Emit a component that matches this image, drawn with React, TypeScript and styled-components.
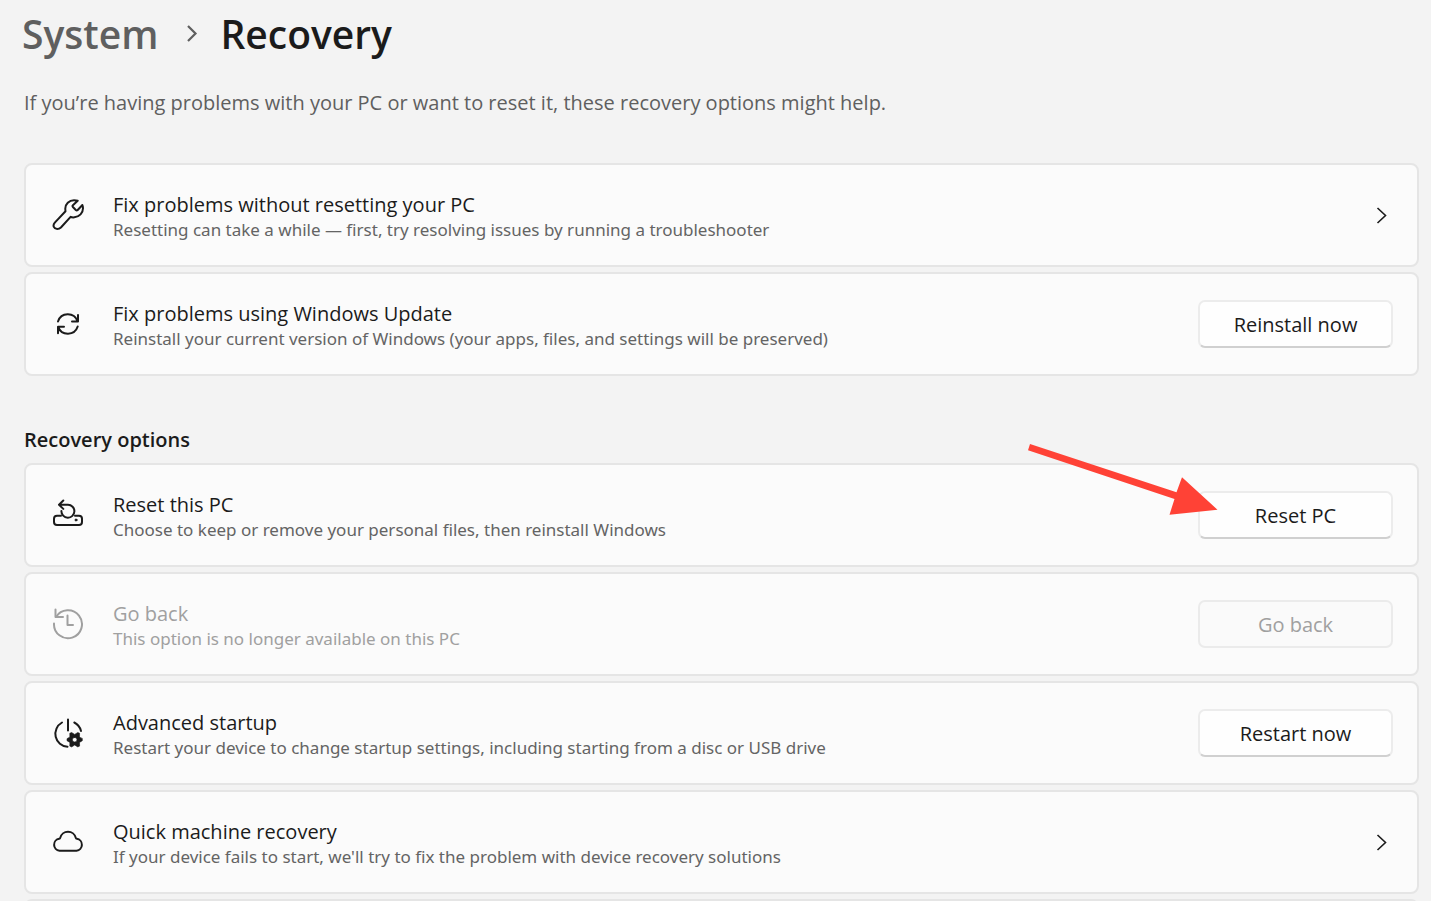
import type { ReactNode } from "react";
import styled, { createGlobalStyle } from "styled-components";

const GlobalStyle = createGlobalStyle`
  * { box-sizing: border-box; }
  body {
    margin: 0;
    background: #f3f3f3;
    color: #1b1b1b;
    font-family: "Open Sans", "Noto Sans", sans-serif;
  }
`;

const Page = styled.main`
  height: 100vh;
  overflow: hidden;
  padding: 6px 12px 0 24px;
`;

const Breadcrumb = styled.nav`
  display: flex;
  align-items: center;
  margin-left: -2px;
  font-size: 39px;
  line-height: 56px;
  font-weight: 600;
`;

const Crumb = styled.a`
  color: #5f5f5f;
  text-decoration: none;
`;

const CrumbArrow = styled.svg`
  width: 12px;
  height: 18px;
  margin: 0 22px 0 28px;
`;

const PageTitle = styled.h1`
  margin: 0;
  font: inherit;
`;

const Intro = styled.p`
  margin: 26px 0 46px;
  color: #5f5f5f;
  font-size: 20px;
  line-height: 29px;
`;

const CardList = styled.section`
  display: flex;
  flex-direction: column;
  gap: 5px;
`;

const SectionTitle = styled.h2`
  margin: 49px 0 8px;
  font-size: 20px;
  line-height: 30px;
  font-weight: 600;
`;

const Card = styled.article<{ $disabled?: boolean }>`
  display: flex;
  align-items: center;
  flex-shrink: 0;
  min-height: 104px;
  padding: 0 24px 0 26px;
  border: 2px solid #e5e5e5;
  border-radius: 8px;
  background: #fbfbfb;
  color: ${(p) => (p.$disabled ? "#a0a0a0" : "#1b1b1b")};
`;

const CardIcon = styled.svg`
  flex: none;
  width: 32px;
  height: 32px;
  margin-right: 29px;
  fill: none;
  stroke: currentColor;
  stroke-width: 2;
  stroke-linecap: round;
  stroke-linejoin: round;
`;

const CardText = styled.div`
  flex: 1;
  padding-top: 4px;
`;

const CardTitle = styled.h3`
  margin: 0;
  font-size: 20px;
  line-height: 26px;
  font-weight: 400;
`;

const CardNote = styled.p<{ $disabled?: boolean }>`
  margin: 0;
  font-family: "Noto Sans", "Open Sans", sans-serif;
  font-size: 17px;
  line-height: 24px;
  color: ${(p) => (p.$disabled ? "#a0a0a0" : "#646464")};
`;

const Action = styled.div`
  position: relative;
  flex: none;
`;

const ActionButton = styled.button`
  display: block;
  width: 195px;
  height: 48px;
  padding: 2px 0 0;
  border: 2px solid #ececec;
  border-bottom-color: #d0d0d0;
  border-radius: 7px;
  background: #fefefe;
  color: #1b1b1b;
  font: inherit;
  font-size: 20px;
  line-height: 28px;

  &:disabled {
    border-color: #ebebeb;
    background: #fafafa;
    color: #a0a0a0;
  }
`;

const OpenButton = styled.button`
  display: flex;
  padding: 0;
  border: 0;
  background: none;
  color: inherit;
`;

const Pointer = styled.svg`
  position: absolute;
  right: 175px;
  bottom: 23px;
  width: 194px;
  height: 76px;
  pointer-events: none;
`;

const icons = {
  wrench: (
    <path d="M13.500 12.200 2.800 23.600C.2 26.600 2 30 5.200 30c1.400 0 2.700-.500 3.700-1.500L18.600 17.800c1.200.600 2.500.700 3.800.500C27.400 17.800 31 14 31 9.200c0-1.200-.200-2.200-.600-3.200l-4.700 5c-.600.600-1.300.600-1.900 0l-2.900-3c-.600-.600-.600-1.200 0-1.800l4.800-4.500C24.400 1.300 23.300 1.200 22 1.200c-5 0-8.700 3.800-8.700 8.300 0 1 .000 1.900.200 2.700Z" />
  ),
  sync: (
    <>
      <path d="M6 13.500a10.300 10.300 0 0 1 19.500-.3M26 7v6.500h-6" />
      <path d="M25.700 18.500a10.300 10.300 0 0 1-19.500.3M6 25.300v-6.500h6" />
    </>
  ),
  drive: (
    <>
      <path d="M9 16.700H5a3 3 0 0 0-3 3V23a3 3 0 0 0 3 3h22a3 3 0 0 0 3-3v-3.300a3 3 0 0 0-3-3h-4" />
      <path d="M11.300 1.500 7 5.700l4.300 4.200M7.500 5.700H16a6.500 6.500 0 1 1-6.600 6.300" />
      <circle cx="24" cy="21" r="1" fill="currentColor" strokeWidth="1" />
    </>
  ),
  history: (
    <>
      <path d="M2 15.500A14 14 0 1 0 4 9" />
      <path d="M3.500 1.500V9H11M15.500 7.500V17H21" />
    </>
  ),
  power: (
    <>
      <path d="M16 2.500v11M10 5.500a13 13 0 0 0 5.500 24.300M22.300 5.500a13 13 0 0 1 6.700 8.500" />
      <path
        fill="currentColor"
        strokeWidth="0.6"
        fillRule="evenodd"
        d="M30.300 21.700v2L27.500 25.400 27.600 29.100 25.800 29.900 22.700 28 19.600 29.900 17.800 29.100 17.900 25.400 15 23.700v-2L17.900 20 17.800 16.300 19.600 15.500 22.700 17.400 25.800 15.500 27.600 16.300 27.500 20ZM22.700 20.400a2.300 2.300 0 1 0 0 4.600 2.300 2.300 0 0 0 0-4.600Z"
      />
    </>
  ),
  cloud: (
    <path d="M7.500 24.700a6 6 0 0 1-.3-11.900c.500 0 .900-.300 1-.900a8 8 0 0 1 15.600 0c.1.600.5.900 1 .900a6 6 0 0 1-.3 11.900Z" />
  ),
};

type RowProps = {
  icon: keyof typeof icons;
  title: string;
  note: string;
  disabled?: boolean;
  children: ReactNode;
};

function Row({ icon, title, note, disabled, children }: RowProps) {
  return (
    <Card $disabled={disabled}>
      <CardIcon viewBox="0 0 32 32" aria-hidden="true">
        {icons[icon]}
      </CardIcon>
      <CardText>
        <CardTitle>{title}</CardTitle>
        <CardNote $disabled={disabled}>{note}</CardNote>
      </CardText>
      {children}
    </Card>
  );
}

function Open({ label }: { label: string }) {
  return (
    <OpenButton type="button" aria-label={label}>
      <svg width="24" height="24" viewBox="0 0 24 24" fill="none" stroke="currentColor" strokeWidth="1.600">
        <path d="m8.500 5 8 7.500-8 7.500" />
      </svg>
    </OpenButton>
  );
}

export default function App() {
  return (
    <>
      <GlobalStyle />
      <Page>
        <Breadcrumb aria-label="Breadcrumb">
          <Crumb href="#system">System</Crumb>
          <CrumbArrow viewBox="0 0 12 18" fill="none" stroke="#5f5f5f" strokeWidth="2.200" aria-hidden="true">
            <path d="m2 1 7.500 7.500L2 16" />
          </CrumbArrow>
          <PageTitle>Recovery</PageTitle>
        </Breadcrumb>
        <Intro>If you’re having problems with your PC or want to reset it, these recovery options might help.</Intro>

        <CardList>
          <Row
            icon="wrench"
            title="Fix problems without resetting your PC"
            note="Resetting can take a while — first, try resolving issues by running a troubleshooter"
          >
            <Open label="Open troubleshooter" />
          </Row>
          <Row
            icon="sync"
            title="Fix problems using Windows Update"
            note="Reinstall your current version of Windows (your apps, files, and settings will be preserved)"
          >
            <ActionButton type="button">Reinstall now</ActionButton>
          </Row>
        </CardList>

        <SectionTitle>Recovery options</SectionTitle>
        <CardList>
          <Row
            icon="drive"
            title="Reset this PC"
            note="Choose to keep or remove your personal files, then reinstall Windows"
          >
            <Action>
              <ActionButton type="button">Reset PC</ActionButton>
              <Pointer viewBox="0 0 194 76" aria-hidden="true">
                <path fill="#ff4236" d="M6 4 152.500 52.300 158 37.300 193.500 69.700 145.500 74.700 150.500 59 4 10.300Z" />
              </Pointer>
            </Action>
          </Row>
          <Row icon="history" title="Go back" note="This option is no longer available on this PC" disabled>
            <ActionButton type="button" disabled>
              Go back
            </ActionButton>
          </Row>
          <Row
            icon="power"
            title="Advanced startup"
            note="Restart your device to change startup settings, including starting from a disc or USB drive"
          >
            <ActionButton type="button">Restart now</ActionButton>
          </Row>
          <Row
            icon="cloud"
            title="Quick machine recovery"
            note="If your device fails to start, we'll try to fix the problem with device recovery solutions"
          >
            <Open label="Open quick machine recovery" />
          </Row>
          <Card />
        </CardList>
      </Page>
    </>
  );
}
